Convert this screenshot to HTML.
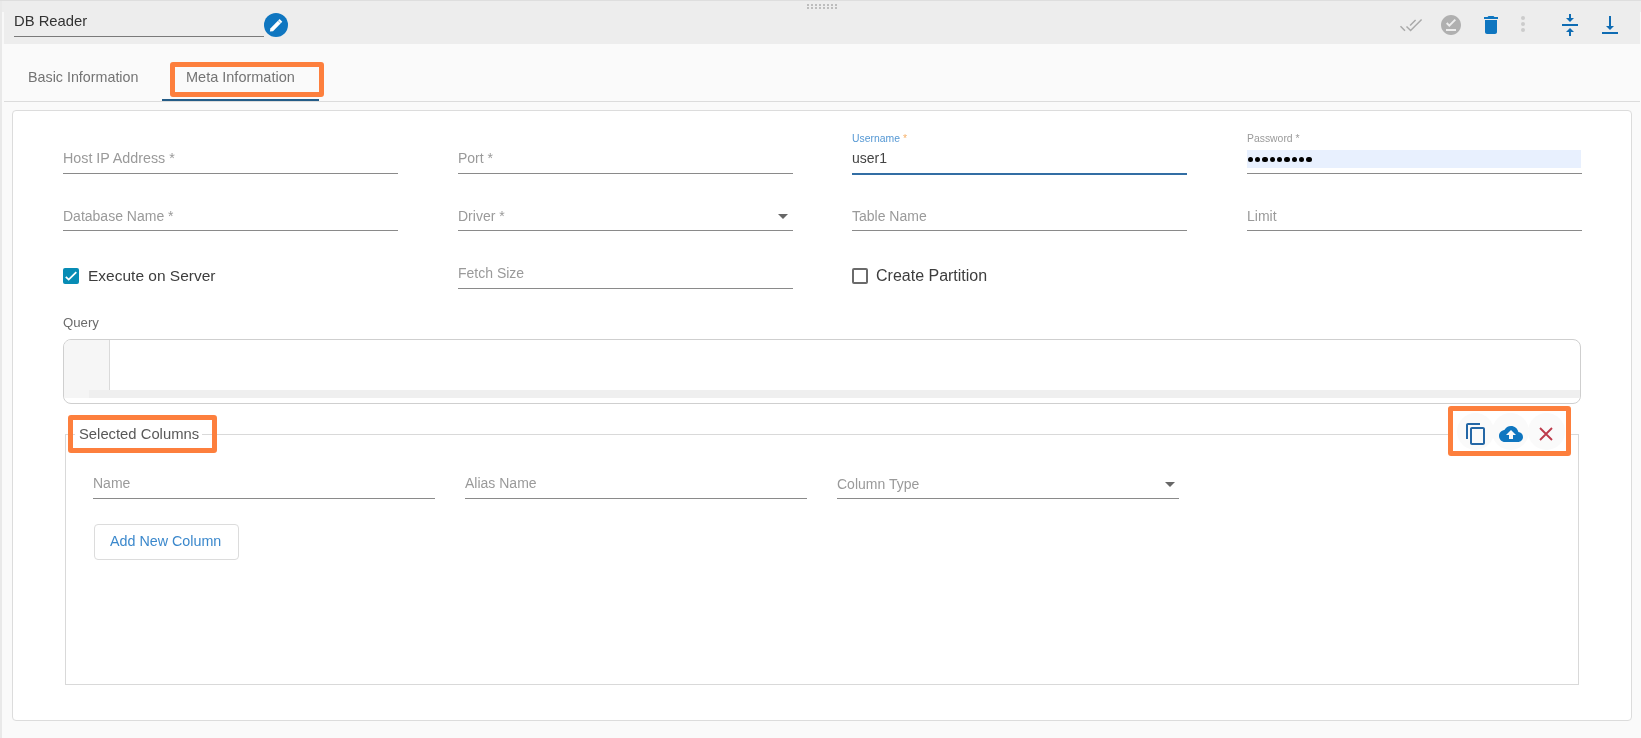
<!DOCTYPE html>
<html><head><meta charset="utf-8"><style>
html,body{margin:0;padding:0;width:1641px;height:738px;overflow:hidden;background:#fafafa}
body div{position:absolute}
.t{white-space:nowrap;font-family:"Liberation Sans", sans-serif;-webkit-font-smoothing:antialiased;will-change:transform}
</style></head><body>
<div style="left:0px;top:0px;width:1641px;height:738px;background:#fafafa"></div>
<div style="left:0px;top:0px;width:1641px;height:1px;background:#dedede"></div>
<div style="left:0px;top:1px;width:1641px;height:43px;background:#ededed"></div>
<div style="left:0px;top:1px;width:2px;height:737px;background:#e9e9e9"></div>
<div style="left:2px;top:12px;width:2px;height:32px;background:#f8f8f8"></div>
<div style="left:1640px;top:12px;width:1px;height:32px;background:#f8f8f8"></div>
<div style="left:807px;top:4px;width:2px;height:2px;background:#bdbdbd"></div>
<div style="left:807px;top:7px;width:2px;height:2px;background:#bdbdbd"></div>
<div style="left:811px;top:4px;width:2px;height:2px;background:#bdbdbd"></div>
<div style="left:811px;top:7px;width:2px;height:2px;background:#bdbdbd"></div>
<div style="left:815px;top:4px;width:2px;height:2px;background:#bdbdbd"></div>
<div style="left:815px;top:7px;width:2px;height:2px;background:#bdbdbd"></div>
<div style="left:819px;top:4px;width:2px;height:2px;background:#bdbdbd"></div>
<div style="left:819px;top:7px;width:2px;height:2px;background:#bdbdbd"></div>
<div style="left:823px;top:4px;width:2px;height:2px;background:#bdbdbd"></div>
<div style="left:823px;top:7px;width:2px;height:2px;background:#bdbdbd"></div>
<div style="left:827px;top:4px;width:2px;height:2px;background:#bdbdbd"></div>
<div style="left:827px;top:7px;width:2px;height:2px;background:#bdbdbd"></div>
<div style="left:831px;top:4px;width:2px;height:2px;background:#bdbdbd"></div>
<div style="left:831px;top:7px;width:2px;height:2px;background:#bdbdbd"></div>
<div style="left:835px;top:4px;width:2px;height:2px;background:#bdbdbd"></div>
<div style="left:835px;top:7px;width:2px;height:2px;background:#bdbdbd"></div>
<div class="t" style="left:14px;top:14.07px;font-size:14.8px;line-height:14.8px;color:#333;">DB Reader</div>
<div style="left:14px;top:36px;width:250px;height:1px;background:#7a7a7a"></div>
<svg style="position:absolute;left:264px;top:12.5px" width="24" height="24" viewBox="0 0 24 24">
<circle cx="12" cy="12" r="12" fill="#0f76c0"/>
<path d="M5.9 18.6 L6.33 15.49 L15.62 6.1 L18.3 8.78 L9.01 18.17 Z" fill="#fff"/>
<path d="M14.06 7.66 L16.74 10.34" stroke="#0f76c0" stroke-width="0.5"/>
</svg>
<svg style="position:absolute;left:1399px;top:13px" width="24" height="24" viewBox="0 0 24 24">
<path d="M1.5 13.3 L6 17.8 M7.5 13.6 L11.6 17.6 L22.6 6.6 M11.1 12.6 L16.6 7" stroke="#a9a9a9" stroke-width="1.45" fill="none"/>
</svg>
<svg style="position:absolute;left:1439px;top:12.9px" width="24" height="24" viewBox="0 0 24 24">
<path d="M12 2C6.5 2 2 6.5 2 12s4.5 10 10 10 10-4.5 10-10S17.5 2 12 2zm5 16H7v-2h10v2zm-6.7-4L7 10.7l1.4-1.4 1.9 1.9 5.3-5.3L17 7.3 10.3 14z" fill="#b0b0b0"/>
</svg>
<svg style="position:absolute;left:1478.7px;top:12.8px" width="24" height="24" viewBox="0 0 24 24">
<path d="M6 19c0 1.1.9 2 2 2h8c1.1 0 2-.9 2-2V7H6v12zM19 4h-3.5l-1-1h-5l-1 1H5v2h14V4z" fill="#0f76c0"/>
</svg>
<div style="left:1521px;top:15.8px;width:4px;height:4px;border-radius:50%;background:#cccccc"></div>
<div style="left:1521px;top:22px;width:4px;height:4px;border-radius:50%;background:#cccccc"></div>
<div style="left:1521px;top:27.9px;width:4px;height:4px;border-radius:50%;background:#cccccc"></div>
<svg style="position:absolute;left:1557.9px;top:12.9px" width="24" height="24" viewBox="0 0 24 24">
<path d="M8 19h3v4h2v-4h3l-4-4-4 4zm8-14h-3V1h-2v4H8l4 4 4-4zM4 11v2h16v-2H4z" fill="#0f6cb3"/>
</svg>
<svg style="position:absolute;left:1597.8px;top:12.9px" width="24" height="24" viewBox="0 0 24 24">
<path d="M16 13h-3V3h-2v10H8l4 4 4-4zM4 19v2h16v-2H4z" fill="#0f6cb3"/>
</svg>
<div class="t" style="left:28px;top:69.60px;font-size:14.3px;line-height:14.3px;color:#747474;">Basic Information</div>
<div class="t" style="left:186px;top:69.63px;font-size:14.5px;line-height:14.5px;color:#747474;">Meta Information</div>
<div style="left:4px;top:101px;width:1636px;height:1px;background:#dcdcdc"></div>
<div style="left:162px;top:99px;width:157px;height:2px;background:#245c87"></div>
<div style="left:170px;top:62px;width:154px;height:35px;box-sizing:border-box;border:5px solid #fd7f3d;border-radius:3px"></div>
<div style="left:12px;top:110px;width:1620px;height:611px;box-sizing:border-box;background:#fff;border:1px solid #dcdcdc;border-radius:4px"></div>
<div class="t" style="left:63px;top:150.90px;font-size:14.3px;line-height:14.3px;color:#9a9a9a;">Host IP Address *</div>
<div style="left:63px;top:173px;width:335px;height:1px;background:#8a8a8a"></div>
<div class="t" style="left:458px;top:151.15px;font-size:14px;line-height:14px;color:#9a9a9a;">Port *</div>
<div style="left:458px;top:173px;width:335px;height:1px;background:#8a8a8a"></div>
<div class="t" style="left:852px;top:134.00px;font-size:10.4px;line-height:10.4px;color:#5598d4;">Username</div>
<div class="t" style="left:903px;top:134.00px;font-size:10.4px;line-height:10.4px;color:#f7b26b;">*</div>
<div class="t" style="left:852px;top:150.95px;font-size:14px;line-height:14px;color:#444;">user1</div>
<div style="left:852px;top:173px;width:335px;height:2px;background:#326ea4"></div>
<div class="t" style="left:1247px;top:134.00px;font-size:10.4px;line-height:10.4px;color:#9a9a9a;">Password *</div>
<div style="left:1247px;top:150px;width:334px;height:17.5px;background:#e8f0fe"></div>
<div style="left:1247.70px;top:156.5px;width:5.2px;height:5.2px;border-radius:50%;background:#000"></div>
<div style="left:1255.03px;top:156.5px;width:5.2px;height:5.2px;border-radius:50%;background:#000"></div>
<div style="left:1262.36px;top:156.5px;width:5.2px;height:5.2px;border-radius:50%;background:#000"></div>
<div style="left:1269.69px;top:156.5px;width:5.2px;height:5.2px;border-radius:50%;background:#000"></div>
<div style="left:1277.02px;top:156.5px;width:5.2px;height:5.2px;border-radius:50%;background:#000"></div>
<div style="left:1284.35px;top:156.5px;width:5.2px;height:5.2px;border-radius:50%;background:#000"></div>
<div style="left:1291.68px;top:156.5px;width:5.2px;height:5.2px;border-radius:50%;background:#000"></div>
<div style="left:1299.01px;top:156.5px;width:5.2px;height:5.2px;border-radius:50%;background:#000"></div>
<div style="left:1306.34px;top:156.5px;width:5.2px;height:5.2px;border-radius:50%;background:#000"></div>
<div style="left:1247px;top:173px;width:335px;height:1px;background:#8a8a8a"></div>
<div class="t" style="left:63px;top:209.15px;font-size:14px;line-height:14px;color:#9a9a9a;">Database Name *</div>
<div style="left:63px;top:230px;width:335px;height:1px;background:#8a8a8a"></div>
<div class="t" style="left:458px;top:209.15px;font-size:14px;line-height:14px;color:#9a9a9a;">Driver *</div>
<svg style="position:absolute;left:778px;top:214px" width="10" height="5" viewBox="0 0 10 5"><path d="M0 0 L10 0 L5 5 Z" fill="#676767"/></svg>
<div style="left:458px;top:230px;width:335px;height:1px;background:#8a8a8a"></div>
<div class="t" style="left:852px;top:209.15px;font-size:14px;line-height:14px;color:#9a9a9a;">Table Name</div>
<div style="left:852px;top:230px;width:335px;height:1px;background:#8a8a8a"></div>
<div class="t" style="left:1247px;top:209.15px;font-size:14px;line-height:14px;color:#9a9a9a;">Limit</div>
<div style="left:1247px;top:230px;width:335px;height:1px;background:#8a8a8a"></div>
<svg style="position:absolute;left:63px;top:268px" width="16" height="16" viewBox="0 0 16 16">
<rect x="0" y="0" width="16" height="16" rx="2" fill="#078cb5"/>
<path d="M2.8 8.8 L5.7 11.6 L13.3 4.2" stroke="#fff" stroke-width="1.8" fill="none"/>
</svg>
<div class="t" style="left:88px;top:267.88px;font-size:15.5px;line-height:15.5px;color:#3d3d3d;">Execute on Server</div>
<div class="t" style="left:458px;top:266.15px;font-size:14px;line-height:14px;color:#9a9a9a;">Fetch Size</div>
<div style="left:458px;top:288px;width:335px;height:1px;background:#8a8a8a"></div>
<div style="left:852px;top:268px;width:16px;height:16px;box-sizing:border-box;border:2px solid #6a6a6a;border-radius:2px"></div>
<div class="t" style="left:876px;top:268.46px;font-size:16px;line-height:16px;color:#3d3d3d;">Create Partition</div>
<div class="t" style="left:63px;top:316.23px;font-size:13.2px;line-height:13.2px;color:#6b6b6b;">Query</div>
<div style="left:63px;top:339px;width:1518px;height:65px;box-sizing:border-box;border:1px solid #cfcfcf;border-radius:8px;overflow:hidden;background:#fff">
<div style="left:0;top:0;width:45px;height:50px;background:#f6f6f6;border-right:1px solid #dadada"></div>
<div style="left:0;top:50px;width:25px;height:8px;background:#f5f5f5"></div>
<div style="left:25px;top:50px;width:1493px;height:8px;background:#efefef"></div>
</div>
<div style="left:65px;top:434px;width:1514px;height:251px;box-sizing:border-box;border:1px solid #d9d9d9;border-top:1px solid #d9d9d9"></div>
<div style="left:75px;top:430px;width:127px;height:8px;background:#fff"></div>
<div class="t" style="left:78.5px;top:426.67px;font-size:14.8px;line-height:14.8px;color:#585858;">Selected Columns</div>
<div style="left:68px;top:415px;width:149px;height:38px;box-sizing:border-box;border:5px solid #fd7f3d;border-radius:3px"></div>
<div style="left:1453px;top:411px;width:114px;height:40px;background:#fff"></div>
<div style="left:1456.7px;top:413.0px;width:37px;height:37px;border-radius:50%;background:#fafafa"></div>
<div style="left:1492.3px;top:413.0px;width:37px;height:37px;border-radius:50%;background:#fafafa"></div>
<div style="left:1528.0px;top:413.0px;width:37px;height:37px;border-radius:50%;background:#fafafa"></div>
<svg style="position:absolute;left:1464.2px;top:422.4px" width="24" height="24" viewBox="0 0 24 24">
<path d="M16 1H4c-1.1 0-2 .9-2 2v14h2V3h12V1zm3 4H8c-1.1 0-2 .9-2 2v14c0 1.1.9 2 2 2h11c1.1 0 2-.9 2-2V7c0-1.1-.9-2-2-2zm0 16H8V7h11v14z" fill="#2467a6"/>
</svg>
<svg style="position:absolute;left:1499px;top:422px" width="24" height="24" viewBox="0 0 24 24">
<path d="M19.35 10.04C18.67 6.59 15.64 4 12 4 9.11 4 6.6 5.64 5.35 8.04 2.34 8.36 0 10.91 0 14c0 3.310 2.69 6 6 6h13c2.76 0 5-2.24 5-5 0-2.64-2.05-4.78-4.65-4.96zM14 13v4h-4v-4H7l5-5 5 5h-3z" fill="#0f76c0"/>
</svg>
<svg style="position:absolute;left:1538px;top:426px" width="16" height="16" viewBox="0 0 16 16">
<path d="M2 2 L14 14 M14 2 L2 14" stroke="#bd3a4b" stroke-width="1.9"/>
</svg>
<div style="left:1448px;top:406px;width:123px;height:50px;box-sizing:border-box;border:5px solid #fd7f3d;border-radius:3px"></div>
<div class="t" style="left:93px;top:476.15px;font-size:14px;line-height:14px;color:#9a9a9a;">Name</div>
<div style="left:93px;top:498px;width:342px;height:1px;background:#8a8a8a"></div>
<div class="t" style="left:465px;top:476.15px;font-size:14px;line-height:14px;color:#9a9a9a;">Alias Name</div>
<div style="left:465px;top:498px;width:342px;height:1px;background:#8a8a8a"></div>
<div class="t" style="left:837px;top:477.15px;font-size:14px;line-height:14px;color:#9a9a9a;">Column Type</div>
<svg style="position:absolute;left:1165px;top:482px" width="10" height="5" viewBox="0 0 10 5"><path d="M0 0 L10 0 L5 5 Z" fill="#676767"/></svg>
<div style="left:837px;top:498px;width:342px;height:1px;background:#8a8a8a"></div>
<div style="left:94px;top:524px;width:145px;height:36px;box-sizing:border-box;border:1px solid #dcdcdc;border-radius:4px;background:#fff"></div>
<div class="t" style="left:110px;top:533.60px;font-size:14.3px;line-height:14.3px;color:#3b88cc;">Add New Column</div>
</body></html>
